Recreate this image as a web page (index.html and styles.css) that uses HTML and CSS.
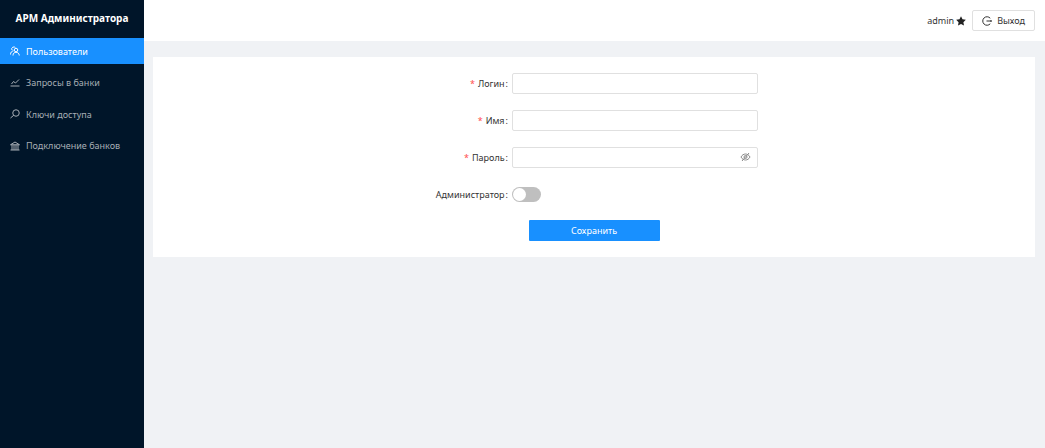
FILE: index.html
```html
<!DOCTYPE html>
<html lang="ru">
<head>
<meta charset="utf-8">
<title>АРМ Администратора</title>
<link rel="stylesheet" href="styles.css">
</head>
<body>
<div class="layout">
  <aside class="sidebar">
    <h1 class="brand">АРМ Администратора</h1>
    <nav class="menu">
      <a class="menu-item active" href="#">
        <svg class="icon" viewBox="0 0 20 20"><path d="M4 8a4 4 0 1 1 7-4M1 17c0-4 2-6.500 6-7.500"/><circle cx="12" cy="8" r="3.500"/><path d="M6 19c0-4 2.500-6.500 6-6.500s6.500 2.500 6.500 6.500"/></svg>
        <span>Пользователи</span>
      </a>
      <a class="menu-item" href="#">
        <svg class="icon" viewBox="0 0 20 20"><path d="M1 16h18M3 12l4-5 4 3 7-7"/></svg>
        <span>Запросы в банки</span>
      </a>
      <a class="menu-item" href="#">
        <svg class="icon" viewBox="0 0 20 20"><circle cx="12" cy="8" r="6.500"/><path d="M7.500 12.500L1 18"/></svg>
        <span>Ключи доступа</span>
      </a>
      <a class="menu-item" href="#">
        <svg class="icon" viewBox="0 0 20 20"><path d="M1 7.500L10 2l9 5.500zM1 18h18M4 8v10M8 8v10M12 8v10M16 8v10"/></svg>
        <span>Подключение банков</span>
      </a>
    </nav>
  </aside>
  <div class="main">
    <header class="header">
      <span class="user">admin
        <svg class="star" viewBox="0 0 20 20"><path d="M10 .5l3 6.200 6.700.9-4.900 4.700 1.200 6.800-6-3.200-6 3.200 1.200-6.800L.3 7.600 7 6.700z"/></svg>
      </span>
      <button class="logout" type="button">
        <svg class="icon" viewBox="0 0 20 20"><path d="M16.500 4.500a8.500 8.500 0 1 0 0 11M9 10h10M17 8l2 2-2 2"/></svg>
        <span>Выход</span>
      </button>
    </header>
    <main class="content">
      <form class="card">
        <div class="row">
          <label class="label required" for="login">Логин</label>
          <div class="field"><input class="input" id="login" type="text"></div>
        </div>
        <div class="row">
          <label class="label required" for="name">Имя</label>
          <div class="field"><input class="input" id="name" type="text"></div>
        </div>
        <div class="row">
          <label class="label required" for="password">Пароль</label>
          <div class="field">
            <input class="input" id="password" type="password">
            <button class="reveal" type="button" aria-label="Показать пароль">
              <svg class="icon" viewBox="0 0 20 20"><path d="M1 10c4-8 14-8 18 0-4 8-14 8-18 0zM17 2L3 18"/><circle cx="10" cy="10" r="3"/></svg>
            </button>
          </div>
        </div>
        <div class="row">
          <label class="label" for="is-admin">Администратор</label>
          <div class="field"><input class="switch" id="is-admin" type="checkbox" role="switch"></div>
        </div>
        <button class="submit" type="submit">Сохранить</button>
      </form>
    </main>
  </div>
</div>
</body>
</html>
```
FILE: styles.css
```css
* {
  box-sizing: border-box;
}

body {
  margin: 0;
  font: 9px/15px "Noto Sans", "Open Sans", sans-serif;
  color: #333;
  background: #f0f2f5;
}

button,
input {
  font: inherit;
  color: inherit;
}

.layout {
  display: flex;
  min-height: 100vh;
}

.sidebar {
  flex: 0 0 144px;
  background: #001529;
}

.brand {
  margin: 0;
  padding: 10px 0 12px;
  font-size: 10px;
  line-height: 16px;
  font-weight: 700;
  text-align: center;
  color: #fff;
}

.menu {
  display: flex;
  flex-direction: column;
  justify-content: space-between;
  height: 121px;
}

.menu-item {
  display: flex;
  align-items: center;
  gap: 6px;
  height: 26px;
  padding: 0 10px;
  color: #a6adb4;
  text-decoration: none;
  white-space: nowrap;
}

.menu-item.active {
  color: #fff;
  background: #1890ff;
}

.icon {
  display: block;
  flex: none;
  width: 10px;
  height: 10px;
  fill: none;
  stroke: currentColor;
  stroke-width: 2;
}

.main {
  flex: 1;
  min-width: 0;
}

.header {
  display: flex;
  align-items: center;
  justify-content: flex-end;
  gap: 6px;
  height: 41px;
  padding: 0 10px;
  background: #fff;
}

.user {
  display: flex;
  align-items: center;
  gap: 2px;
}

.star {
  width: 10px;
  height: 10px;
  fill: #222;
}

.logout {
  display: flex;
  align-items: center;
  gap: 5px;
  height: 21px;
  padding: 0 9px;
  border: 1px solid #e0e0e0;
  border-radius: 2px;
  background: #fff;
}

.content {
  padding: 16px 10px 16px 9px;
}

.card {
  display: flex;
  flex-direction: column;
  gap: 15px;
  padding: 15px 0 16px;
  background: #fff;
}

.row {
  display: grid;
  grid-template-columns: 359fr 246fr 277fr;
  align-items: center;
  min-height: 22px;
}

.label {
  padding-right: 4px;
  text-align: right;
}

.label::after {
  content: ":";
  margin-left: 1px;
}

.required::before {
  content: "*";
  margin-right: 3px;
  color: #ff4d4f;
}

.field {
  display: flex;
  position: relative;
}

.input {
  width: 100%;
  height: 21px;
  padding: 0 7px;
  border: 1px solid #e0e0e0;
  border-radius: 2px;
  background: #fff;
}

.reveal {
  position: absolute;
  top: 5px;
  right: 7px;
  padding: 0;
  border: 0;
  color: #8c8c8c;
  background: none;
}

.reveal .icon {
  width: 11px;
}

.switch {
  appearance: none;
  display: flex;
  align-items: center;
  width: 29px;
  height: 15px;
  margin: 0;
  padding: 1px;
  border-radius: 8px;
  background: #bfbfbf;
}

.switch::before {
  content: "";
  width: 13px;
  height: 13px;
  border-radius: 50%;
  background: #fff;
}

.switch:checked {
  justify-content: flex-end;
  background: #1890ff;
}

.submit {
  align-self: center;
  width: 131px;
  height: 21px;
  padding: 0;
  border: 0;
  border-radius: 1px;
  color: #fff;
  background: #1890ff;
}
```
